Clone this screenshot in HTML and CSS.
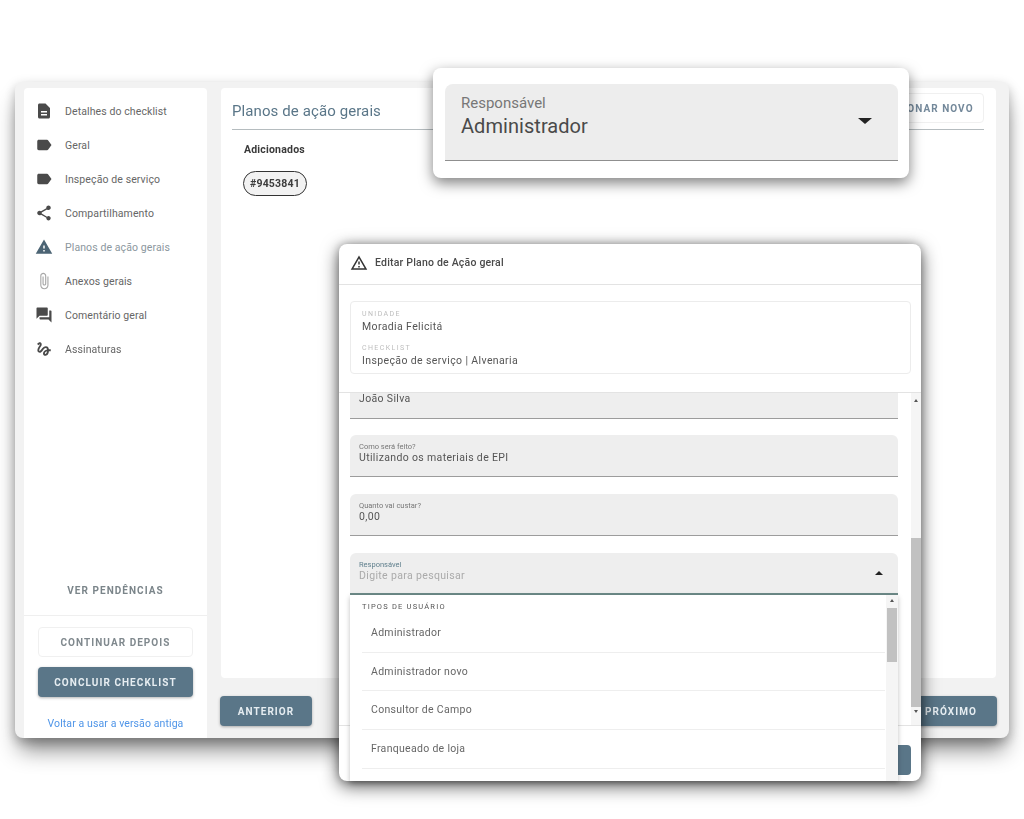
FILE: index.html
```html
<!DOCTYPE html>
<html lang="pt-BR">

<head>
    <meta charset="UTF-8">
    <meta name="viewport" content="width=device-width, initial-scale=1.0">
    <title>Planos de ação gerais</title>
    <link rel="stylesheet" href="styles.css">
</head>

<body>
    <svg class="defs" width="0" height="0">
        <symbol id="i-label" viewBox="0 0 24 24"><path d="M17.63 5.84C17.27 5.33 16.67 5 16 5L5 5.01C3.9 5.01 3 5.9 3 7v10c0 1.1.9 1.99 2 1.99L16 19c.67 0 1.27-.33 1.63-.84L22 12l-4.37-6.16z"/></symbol>
    </svg>

    <div class="stage">
        <div class="app">
            <aside class="sidebar">
                <ul class="menu">
                    <li class="menu-item"><svg class="icon" viewBox="0 0 24 24"><path d="M14 2H6c-1.1 0-1.99.9-1.99 2L4 20c0 1.1.89 2 1.99 2H18c1.1 0 2-.9 2-2V8l-6-6zm2 16H8v-2h8v2zm0-4H8v-2h8v2z"/></svg>Detalhes do checklist</li>
                    <li class="menu-item"><svg class="icon"><use href="#i-label"/></svg>Geral</li>
                    <li class="menu-item"><svg class="icon"><use href="#i-label"/></svg>Inspeção de serviço</li>
                    <li class="menu-item"><svg class="icon" viewBox="0 0 24 24"><path d="M18 16.08c-.76 0-1.44.3-1.96.77L8.91 12.7c.05-.23.09-.46.09-.7s-.04-.47-.09-.7l7.05-4.11c.54.5 1.25.81 2.04.81 1.66 0 3-1.34 3-3s-1.34-3-3-3-3 1.34-3 3c0 .24.04.47.09.7L8.04 9.81C7.5 9.31 6.79 9 6 9c-1.66 0-3 1.34-3 3s1.34 3 3 3c.79 0 1.5-.31 2.04-.81l7.12 4.16c-.05.21-.08.43-.08.65 0 1.61 1.31 2.92 2.92 2.92s2.92-1.31 2.92-2.92-1.31-2.92-2.92-2.92z"/></svg>Compartilhamento</li>
                    <li class="menu-item active"><svg class="icon" viewBox="0 0 24 24"><path d="M1 21h22L12 2 1 21zm12-3h-2v-2h2v2zm0-4h-2v-4h2v4z"/></svg>Planos de ação gerais</li>
                    <li class="menu-item"><svg class="icon clip" viewBox="0 0 24 24"><path d="M16.5 6v11.5c0 2.21-1.79 4-4 4s-4-1.79-4-4V5c0-1.38 1.12-2.5 2.5-2.5s2.5 1.12 2.5 2.5v10.5c0 .55-.45 1-1 1s-1-.45-1-1V6H10v9.5c0 1.38 1.12 2.5 2.5 2.5s2.5-1.12 2.5-2.5V5c0-2.21-1.79-4-4-4S7 2.79 7 5v12.5c0 3.04 2.46 5.5 5.5 5.5s5.5-2.46 5.5-5.5V6h-1.5z"/></svg>Anexos gerais</li>
                    <li class="menu-item"><svg class="icon" viewBox="0 0 24 24"><path d="M21 6h-2v9H6v2c0 .55.45 1 1 1h11l4 4V7c0-.55-.45-1-1-1zm-4 6V3c0-.55-.45-1-1-1H3c-.55 0-1 .45-1 1v14l4-4h10c.55 0 1-.45 1-1z"/></svg>Comentário geral</li>
                    <li class="menu-item"><svg class="icon" viewBox="0 0 24 24"><path d="M4.59 6.89c.7-.71 1.4-1.35 1.71-1.22.5.2 0 1.03-.3 1.52-.25.42-2.86 3.89-2.86 6.31 0 1.28.48 2.34 1.34 2.98.75.56 1.74.73 2.64.46 1.07-.31 1.95-1.4 3.06-2.77 1.21-1.49 2.83-3.44 4.08-3.44 1.63 0 1.65 1.01 1.76 1.79-3.78.64-5.38 3.67-5.38 5.37 0 1.7 1.44 3.09 3.21 3.09 1.63 0 4.29-1.33 4.69-6.1H21v-2.5h-2.47c-.15-1.65-1.09-4.2-4.03-4.2-2.25 0-4.18 1.91-4.94 2.84-.58.73-2.06 2.48-2.29 2.72-.25.3-.68.84-1.11.84-.45 0-.72-.83-.36-1.92.35-1.09 1.4-2.86 1.85-3.52.78-1.14 1.3-1.92 1.3-3.28C8.95 3.69 7.31 3 6.44 3 5.12 3 3.97 4 3.72 4.25c-.36.36-.66.66-.88.93l1.75 1.71zm9.29 11.66c-.31 0-.74-.26-.74-.72 0-.6.73-2.2 2.87-2.76-.3 2.69-1.43 3.48-2.13 3.48z"/></svg>Assinaturas</li>
                </ul>
                <div class="pending">VER PENDÊNCIAS</div>
                <div class="side-actions">
                    <button class="btn btn-light">CONTINUAR DEPOIS</button>
                    <button class="btn btn-dark">CONCLUIR CHECKLIST</button>
                    <a class="old-link">Voltar a usar a versão antiga</a>
                </div>
            </aside>

            <main class="content">
                <section class="panel">
                    <div class="panel-head">
                        <h1>Planos de ação gerais</h1>
                        <button class="btn btn-light btn-new">ADICIONAR NOVO</button>
                    </div>
                    <h2>Adicionados</h2>
                    <span class="chip">#9453841</span>
                </section>
                <div class="pager">
                    <button class="btn btn-dark btn-page">ANTERIOR</button>
                    <button class="btn btn-dark btn-page">PRÓXIMO</button>
                </div>
            </main>
        </div>

        <!-- modal de edicao -->
        <div class="modal">
            <div class="modal-head">
                <svg class="icon warn" viewBox="0 0 24 24"><path d="M12 5.99L19.53 19H4.47L12 5.99M12 2L1 21h22L12 2zm1 14h-2v2h2v-2zm0-6h-2v4h2v-4z"/></svg>
                Editar Plano de Ação geral
            </div>
            <div class="modal-info">
                <div class="info-box">
                    <div class="info-label">UNIDADE</div>
                    <div class="info-value">Moradia Felicitá</div>
                    <div class="info-label second">CHECKLIST</div>
                    <div class="info-value">Inspeção de serviço | Alvenaria</div>
                </div>
            </div>
            <div class="modal-body">
                <div class="fields">
                    <div class="field field-cut"><div class="field-value">João Silva</div></div>
                    <div class="field">
                        <div class="field-label">Como será feito?</div>
                        <div class="field-value">Utilizando os materiais de EPI</div>
                    </div>
                    <div class="field">
                        <div class="field-label">Quanto vai custar?</div>
                        <div class="field-value">0,00</div>
                    </div>
                    <div class="field field-focus">
                        <div class="field-label">Responsável</div>
                        <div class="field-value placeholder">Digite para pesquisar</div>
                        <span class="arrow-up"></span>
                    </div>
                </div>
                <div class="scrollbar">
                    <span class="arrow-up small"></span>
                    <span class="thumb"></span>
                    <span class="arrow-down small"></span>
                </div>
            </div>
            <div class="modal-foot">
                <span class="foot-btn"></span>
            </div>

            <div class="dropdown">
                <div class="options">
                    <div class="group-title">TIPOS DE USUÁRIO</div>
                    <div class="option">Administrador</div>
                    <div class="option">Administrador novo</div>
                    <div class="option">Consultor de Campo</div>
                    <div class="option">Franqueado de loja</div>
                </div>
                <div class="scrollbar mini">
                    <span class="arrow-up small"></span>
                    <span class="thumb"></span>
                </div>
            </div>
        </div>

        <!-- destaque do campo -->
        <div class="callout">
            <div class="callout-field">
                <div class="callout-label">Responsável</div>
                <div class="callout-value">Administrador</div>
                <span class="arrow-down big"></span>
            </div>
        </div>
    </div>
</body>

</html>
```
FILE: styles.css
```css
* {
    box-sizing: border-box;
}

body {
    margin: 0;
    background-color: #fff;
    font-family: Roboto, "Liberation Sans", sans-serif;
    color: #555;
}

.defs {
    position: absolute;
}

.stage {
    position: relative;
    width: 1024px;
    height: 819px;
    overflow: hidden;
    padding: 82px 15px 0;
    filter: blur(.4px);
}

.app {
    display: flex;
    height: 656px;
    padding: 6px 13px 0 9px;
    background-color: #f2f2f2;
    border-radius: 8px;
    box-shadow: 0 16px 22px -4px rgba(0, 0, 0, .45), 0 4px 12px rgba(0, 0, 0, .25);
}

.icon {
    width: 18px;
    height: 18px;
    flex: none;
    fill: #4a4a4a;
}

/* menu lateral */
.sidebar {
    display: flex;
    flex-direction: column;
    width: 183px;
    background-color: #fff;
    border-radius: 4px 4px 0 0;
}

.menu {
    list-style: none;
    margin: 0;
    padding: 6px 0 0 11px;
    flex: 1;
}

.menu-item {
    display: flex;
    align-items: center;
    gap: 12px;
    height: 34px;
    font-size: 10.5px;
    letter-spacing: .1px;
    color: #666;
}

.menu-item.active {
    color: #8b979e;
}

.menu-item.active .icon {
    fill: #4c6474;
}

.icon.clip {
    fill: #a8a8a8;
}

.pending {
    display: flex;
    align-items: flex-end;
    justify-content: center;
    height: 53px;
    padding-bottom: 19px;
    font-size: 10px;
    font-weight: 700;
    letter-spacing: 1.05px;
    color: #7b858a;
    border-bottom: 1px solid #efefef;
}

.side-actions {
    display: flex;
    flex-direction: column;
    align-items: center;
    padding-top: 11px;
    height: 122px;
}

.btn {
    font-family: inherit;
    font-size: 10px;
    font-weight: 700;
    letter-spacing: 1.05px;
    white-space: nowrap;
    border-radius: 4px;
    cursor: pointer;
}

.btn-light {
    width: 155px;
    height: 30px;
    background-color: #fff;
    border: 1px solid #f0f0f0;
    color: #80898e;
}

.btn-dark {
    width: 155px;
    height: 30px;
    margin-top: 10px;
    background-color: #5a7688;
    border: 0;
    color: #e6edf1;
    box-shadow: 0 1px 3px rgba(0, 0, 0, .3);
}

.old-link {
    margin-top: 20px;
    font-size: 10.5px;
    letter-spacing: .1px;
    color: #4f95e8;
}

/* area principal */
.content {
    flex: 1;
    display: flex;
    flex-direction: column;
    margin-left: 14px;
}

.panel {
    height: 590px;
    padding: 5px 12px 0 11px;
    background-color: #fff;
    border-radius: 4px;
}

.panel-head {
    display: flex;
    justify-content: space-between;
    align-items: center;
    height: 37px;
    border-bottom: 1.5px solid #b5bcbf;
}

.panel-head h1 {
    margin: 0;
    font-size: 15px;
    font-weight: 400;
    letter-spacing: .1px;
    color: #5a7688;
}

.btn-new {
    width: 118px;
    margin-bottom: 6px;
    color: #73889a;
}

.panel h2 {
    margin: 13px 0 0 12px;
    font-size: 10.5px;
    font-weight: 700;
    letter-spacing: .2px;
    color: #3a3a3a;
}

.chip {
    display: inline-block;
    margin: 15px 0 0 11px;
    padding: 0 6px;
    height: 25px;
    line-height: 24px;
    font-size: 10.5px;
    font-weight: 700;
    letter-spacing: .2px;
    color: #3c3c3c;
    background-color: #f2f2f2;
    border: 1.5px solid #333;
    border-radius: 13px;
}

.pager {
    display: flex;
    justify-content: space-between;
    margin: 8px -1px 0 -1px;
}

.btn-page {
    width: 92px;
    margin-top: 10px;
}

/* modal */
.modal {
    position: absolute;
    left: 339px;
    top: 244px;
    display: flex;
    flex-direction: column;
    width: 582px;
    height: 537px;
    background-color: #fff;
    border-radius: 8px;
    box-shadow: 0 5px 18px rgba(0, 0, 0, .65), 0 0 8px rgba(0, 0, 0, .25);
}

.modal-head {
    display: flex;
    align-items: center;
    gap: 7px;
    height: 41px;
    padding: 0 0 3px 11px;
    font-size: 10.5px;
    font-weight: 500;
    letter-spacing: .2px;
    color: #4a4a4a;
    border-bottom: 1px solid #e3e3e3;
}

.icon.warn {
    fill: #333;
}

.modal-info {
    height: 108px;
    padding: 16px 10px 0 11px;
    border-bottom: 1px solid #e3e3e3;
}

.info-box {
    height: 73px;
    padding: 8px 11px;
    border: 1px solid #ececec;
    border-radius: 4px;
}

.info-label {
    font-size: 7px;
    letter-spacing: 1.4px;
    line-height: 9px;
    color: #bdbdbd;
}

.info-label.second {
    margin-top: 10px;
}

.info-value {
    margin-top: 1px;
    font-size: 10.5px;
    line-height: 14px;
    letter-spacing: .38px;
    color: #555;
}

.modal-body {
    display: flex;
    justify-content: space-between;
    height: 332px;
    padding-left: 11px;
}

.fields {
    display: flex;
    flex-direction: column;
    gap: 17px;
    width: 548px;
}

.field {
    position: relative;
    height: 42px;
    padding: 7px 9px 0;
    background-color: #eee;
    border-bottom: 1px solid #9c9c9c;
    border-radius: 6px 6px 0 0;
}

.field-cut {
    height: 26px;
    margin-bottom: -1px;
    padding-top: 0;
    border-radius: 0;
}

.field-cut .field-value {
    margin-top: -1px;
}

.field-label {
    font-size: 7.5px;
    line-height: 9px;
    color: #777;
}

.field-value {
    font-size: 10.5px;
    line-height: 14px;
    letter-spacing: .35px;
    color: #555;
}

.field-focus {
    border-bottom: 2px solid #6d8a88;
}

.field-focus .field-label {
    color: #5f7f8c;
}

.placeholder {
    color: #aaa;
}

.arrow-up,
.arrow-down {
    display: block;
    width: 0;
    height: 0;
    border-left: 4px solid transparent;
    border-right: 4px solid transparent;
}

.arrow-up {
    border-bottom: 4px solid #222;
}

.arrow-down {
    border-top: 4px solid #222;
}

.field .arrow-up {
    position: absolute;
    right: 15px;
    top: 18px;
}

.scrollbar {
    display: flex;
    flex-direction: column;
    align-items: center;
    width: 10px;
    padding-top: 6px;
    background-color: #f5f5f5;
}

.arrow-up.small,
.arrow-down.small {
    border-left-width: 2.5px;
    border-right-width: 2.5px;
    border-bottom-width: 3px;
    border-top-width: 3px;
    border-bottom-color: #555;
    border-top-color: #555;
}

.arrow-down.small {
    margin-top: 3px;
}

.thumb {
    width: 100%;
    height: 169px;
    margin-top: 136px;
    background-color: #c1c1c1;
}

.modal-foot {
    flex: 1;
    display: flex;
    justify-content: flex-end;
    padding: 19px 10px 0 0;
    border-top: 1px solid #e3e3e3;
}

.foot-btn {
    width: 60px;
    height: 30px;
    background-color: #5a7688;
    border-radius: 4px;
}

.dropdown {
    position: absolute;
    left: 11px;
    top: 351px;
    bottom: 0;
    display: flex;
    justify-content: space-between;
    width: 548px;
    overflow: hidden;
    background-color: #fff;
    box-shadow: 0 2px 5px rgba(0, 0, 0, .25);
}

.options {
    flex: 1;
    padding: 0 1px 0 12px;
}

.group-title {
    height: 19px;
    padding-top: 7px;
    font-size: 7.5px;
    line-height: 9px;
    letter-spacing: 1.2px;
    color: #555;
}

.option {
    height: 38.7px;
    padding: 12px 0 0 9px;
    font-size: 10.5px;
    line-height: 14px;
    letter-spacing: .3px;
    color: #666;
    border-bottom: 1px solid #eee;
}

.scrollbar.mini {
    width: 12px;
    padding-top: 4px;
}

.scrollbar.mini .thumb {
    width: 10px;
    height: 54px;
    margin-top: 6px;
}

/* caixa de destaque */
.callout {
    position: absolute;
    left: 433px;
    top: 68px;
    width: 476px;
    height: 110px;
    padding: 16px 11px 0 12px;
    background-color: #fff;
    border-radius: 8px;
    box-shadow: 0 5px 14px rgba(0, 0, 0, .5);
}

.callout-field {
    position: relative;
    height: 77px;
    padding: 10px 16px 0;
    background-color: #ededed;
    border-bottom: 1.5px solid #8f8f8f;
    border-radius: 8px 8px 0 0;
}

.callout-label {
    font-size: 15px;
    line-height: 18px;
    color: #777;
}

.callout-value {
    margin-top: 1px;
    font-size: 20px;
    line-height: 26px;
    letter-spacing: .05px;
    color: #4a4a4a;
}

.arrow-down.big {
    position: absolute;
    right: 26px;
    top: 34px;
    border-left-width: 7px;
    border-right-width: 7px;
    border-top-width: 6px;
}
```
